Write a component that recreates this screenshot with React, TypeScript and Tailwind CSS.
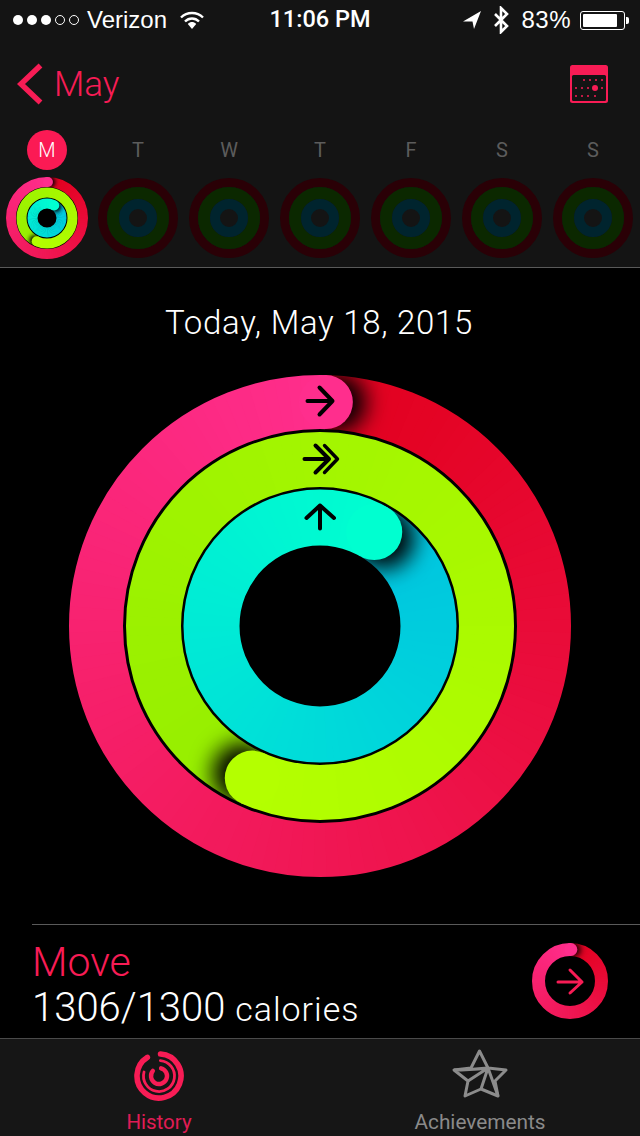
import { useId, type ReactNode } from 'react';

const ROBOTO = "font-['Roboto',sans-serif]";
const ARIAL = "font-['Liberation_Sans',sans-serif]";

type RingDef = { r: number; w: number; end: number; from: string; to: string };

const BIG_RINGS: RingDef[] = [
  { r: 224, w: 54, end: 1.5, from: '#e2001d', to: '#ff2e8d' },
  { r: 166.5, w: 55, end: 204, from: '#96ee00', to: '#b4ff00' },
  { r: 108.5, w: 56, end: 30, from: '#00c2e0', to: '#00ffd0' },
];

const MINI_RINGS: RingDef[] = [
  { r: 36, w: 10, end: 1.5, from: '#e2001d', to: '#ff2e8d' },
  { r: 25.5, w: 10, end: 204, from: '#96ee00', to: '#b4ff00' },
  { r: 14.5, w: 10, end: 30, from: '#00c2e0', to: '#00ffd0' },
];

const MOVE_RING: RingDef[] = [{ r: 31.5, w: 13, end: 1.5, from: '#e2001d', to: '#ff2e8d' }];

const DAYS = ['T', 'W', 'T', 'F', 'S', 'S'];

function polar(r: number, deg: number) {
  const a = (deg * Math.PI) / 180;
  return [r * Math.sin(a), -r * Math.cos(a)];
}

function mix(a: string, b: string, t: number) {
  const out = [1, 3, 5].map((i) => {
    const x = parseInt(a.slice(i, i + 2), 16);
    const y = parseInt(b.slice(i, i + 2), 16);
    return Math.round(x + (y - x) * t);
  });
  return `rgb(${out.join(',')})`;
}

function arc(r: number, start: number, end: number) {
  const [x1, y1] = polar(r, start);
  const [x2, y2] = polar(r, end);
  const large = end - start > 180 ? 1 : 0;
  return `M${x1} ${y1}A${r} ${r} 0 ${large} 1 ${x2} ${y2}`;
}

function Segments({ ring, from, to }: { ring: RingDef; from: number; to: number }) {
  // short arcs so the colour can follow the angle, drawn wide and trimmed by the mask
  const paths = [];
  for (let d = from; d < to; d += 3) {
    paths.push(
      <path
        key={d}
        d={arc(ring.r, ring.end + d, ring.end + Math.min(d + 5, 360))}
        fill="none"
        stroke={mix(ring.from, ring.to, d / 360)}
        strokeWidth={ring.w + 4}
      />
    );
  }
  return <>{paths}</>;
}

function Ring({ ring, blur, id }: { ring: RingDef; blur: number; id: string }) {
  const [cx, cy] = polar(ring.r, ring.end);
  const [sx, sy] = polar(ring.r, ring.end + ((ring.w * 0.2) / ring.r) * 57.3);
  const box = ring.r + ring.w;
  return (
    <g>
      <mask id={id} maskUnits="userSpaceOnUse" x={-box} y={-box} width={box * 2} height={box * 2}>
        <circle r={ring.r} fill="none" stroke="white" strokeWidth={ring.w} />
      </mask>
      <filter id={`${id}b`} x="-150%" y="-150%" width="400%" height="400%">
        <feGaussianBlur stdDeviation={blur} />
      </filter>
      <g mask={`url(#${id})`}>
        <Segments ring={ring} from={0} to={360} />
        <circle cx={sx} cy={sy} r={ring.w * 0.55} fill="black" filter={`url(#${id}b)`} />
        <Segments ring={ring} from={300} to={360} />
      </g>
      <circle cx={cx} cy={cy} r={ring.w / 2} fill={ring.to} />
    </g>
  );
}

function Rings({ rings, size, blur, children }: { rings: RingDef[]; size: number; blur: number; children?: ReactNode }) {
  const id = useId().replace(/[^a-zA-Z0-9]/g, '');
  return (
    <svg width={size} height={size} viewBox={`${-size / 2} ${-size / 2} ${size} ${size}`} className="block">
      {rings.map((ring, i) => (
        <Ring key={i} ring={ring} blur={blur} id={`${id}r${i}`} />
      ))}
      {children}
    </svg>
  );
}

function EmptyRings() {
  return (
    <svg width="80" height="80" viewBox="-40 -40 80 80" className="block">
      <circle r="35.5" fill="none" stroke="#2a0006" strokeWidth="9" />
      <circle r="25" fill="none" stroke="#0b2800" strokeWidth="12" />
      <circle r="14" fill="none" stroke="#00242e" strokeWidth="10" />
    </svg>
  );
}

function SignalDots() {
  return (
    <div className="flex gap-[4px]">
      <div className="w-[10px] h-[10px] rounded-full bg-white" />
      <div className="w-[10px] h-[10px] rounded-full bg-white" />
      <div className="w-[10px] h-[10px] rounded-full bg-white" />
      <div className="w-[10px] h-[10px] rounded-full border border-white" />
      <div className="w-[10px] h-[10px] rounded-full border border-white" />
    </div>
  );
}

function StatusBar() {
  return (
    <div className={`h-[40px] grid grid-cols-[1fr_auto_1fr] items-center text-white ${ARIAL}`}>
      <div className="flex items-center pl-[13px]">
        <SignalDots />
        <span className="ml-[8px] text-[24px] leading-none">Verizon</span>
        <svg width="24" height="18" viewBox="0 0 24 18" className="ml-[13px]">
          <path d="M1 6.5C7 .5 17 .5 23 6.5" fill="none" stroke="white" strokeWidth="2.4" />
          <path d="M5 10.5C9 6.5 15 6.5 19 10.5" fill="none" stroke="white" strokeWidth="2.4" />
          <path d="M7.8 13C10.5 10.4 13.5 10.4 16.2 13L12 18Z" fill="white" />
        </svg>
      </div>
      <div className={`text-[23.5px] leading-none font-medium ${ROBOTO}`}>11:06 PM</div>
      <div className="flex items-center justify-end pr-[11px]">
        <svg width="18" height="18" viewBox="0 0 18 18">
          <path d="M0 10.5L18 0L11 18L9.5 10.5Z" fill="white" />
        </svg>
        <svg width="16" height="28" viewBox="0 0 16 28" className="ml-[12px]">
          <path d="M2 8L14 20L8 26V2L14 8L2 20" fill="none" stroke="white" strokeWidth="2.6" />
        </svg>
        <span className="ml-[12px] text-[24px] leading-none tracking-[0.5px]">83%</span>
        <div className="ml-[9px] w-[45px] h-[19px] rounded-[3px] border border-white p-[2px]">
          <div className="w-[34px] h-full bg-white rounded-[1px]" />
        </div>
        <div className="ml-[1px] w-[3px] h-[7px] bg-white rounded-r-[2px]" />
      </div>
    </div>
  );
}

function CalendarIcon() {
  return (
    <svg width="38" height="38" viewBox="0 0 38 38">
      <rect width="38" height="38" rx="2.5" fill="#f81c55" />
      <rect x="2" y="10" width="34" height="26" rx="1.5" fill="#141414" />
      {[14, 20, 26, 32].map((x) => (
        <circle key={x} cx={x} cy="15" r="1" fill="#f81c55" />
      ))}
      {[6, 12, 18, 32].map((x) => (
        <circle key={x} cx={x} cy="23" r="1" fill="#f81c55" />
      ))}
      <circle cx="25" cy="23" r="3" fill="#f81c55" />
      {[6, 12, 18, 25].map((x) => (
        <circle key={x} cx={x} cy="31" r="1" fill="#f81c55" />
      ))}
    </svg>
  );
}

function NavBar() {
  return (
    <div className="h-[88px] flex items-center justify-between pl-[17px] pr-[32px]">
      <div className="flex items-center">
        <svg width="26" height="42" viewBox="0 0 26 42">
          <path d="M23.5 2.5L4 21L23.5 39.5" fill="none" stroke="#f81c55" strokeWidth="5.5" />
        </svg>
        <span className={`ml-[11px] text-[35px] leading-none font-light text-[#f81c55] ${ROBOTO}`}>May</span>
      </div>
      <CalendarIcon />
    </div>
  );
}

function WeekStrip() {
  return (
    <div className="h-[140px] border-b border-[#5a5a5a] grid grid-cols-7 px-[1.5px] pt-[2px]">
      <div className="flex flex-col items-center">
        <div className={`w-[40px] h-[40px] rounded-full bg-[#fb1a54] flex items-center justify-center text-white text-[20px] font-light ${ROBOTO}`}>
          M
        </div>
        <div className="mt-[7px] rounded-full bg-black">
          <Rings rings={MINI_RINGS} size={82} blur={2} />
        </div>
      </div>
      {DAYS.map((d, i) => (
        <div key={i} className="flex flex-col items-center">
          <div className={`h-[40px] flex items-center text-[20px] text-[#5c5c5c] ${ROBOTO}`}>{d}</div>
          <div className="mt-[8px]">
            <EmptyRings />
          </div>
        </div>
      ))}
    </div>
  );
}

function Activity() {
  return (
    <div className="flex-1 bg-black flex flex-col items-center">
      <h1 className={`mt-[35px] mr-[2px] h-[40px] leading-[40px] text-[33px] font-light tracking-[0.7px] text-white ${ROBOTO}`}>
        Today, May 18, 2015
      </h1>
      <div className="mt-[32px]">
        <Rings rings={BIG_RINGS} size={502} blur={11}>
          <g transform="translate(-320 -626)" fill="none" stroke="black" strokeLinecap="round" strokeLinejoin="round">
            <g strokeWidth="4">
              <path d="M307.5 401H332.5M319.5 387.5L332.5 401L319.5 414.5" />
              <path d="M304.5 459H328.5M315.5 445.5L329 459L315.5 472.5" />
              <path d="M320 528.5V505.5M306.5 518L320 505.5L334 518" />
            </g>
            <path d="M324.5 445.5L337.5 459L324.5 472.5" strokeWidth="3.4" />
          </g>
        </Rings>
      </div>
      <div className="mt-[47px] ml-[32px] self-stretch border-t border-[#5a5a5a] h-[113px] flex items-center justify-between pr-[32px]">
        <div className={`pt-[8px] font-light ${ROBOTO}`}>
          <div className="text-[41px] leading-[46px] text-[#f81c55]">Move</div>
          <div className="text-white leading-[46px] text-[40px]">
            1306/1300 <span className="text-[34px] tracking-[1px]">calories</span>
          </div>
        </div>
        <Rings rings={MOVE_RING} size={76} blur={3}>
          <path d="M-12 1H12M0 -11L12 1L0 12" fill="none" stroke="#f81c55" strokeWidth="3" strokeLinecap="round" strokeLinejoin="round" />
        </Rings>
      </div>
    </div>
  );
}

function HistoryIcon() {
  return (
    <svg width="52" height="52" viewBox="-26 -26 52 52" fill="none" stroke="#f81c55" strokeLinecap="round">
      <path d={arc(22, 4, 328)} strokeWidth="5.6" />
      <path d={arc(15.5, 5, 285)} strokeWidth="2.8" />
      <path d={arc(8, 15, 310)} strokeWidth="4.4" />
    </svg>
  );
}

function StarIcon() {
  return (
    <svg width="70" height="62" viewBox="0 0 70 62" fill="none" stroke="#8c8c8c" strokeWidth="3" strokeLinejoin="round">
      <path d="M34.5 6L43 23L61 25L50 36L53 51L36 44L20 51L23 36L9 25L26 23Z" />
      <path d="M9 25C20 25 33 24 43 23L23 36M43 23L36 44M43 23L53 51" />
    </svg>
  );
}

function TabBar() {
  return (
    <div className={`h-[98px] bg-[#161616] border-t border-[#4a4a4a] grid grid-cols-2 ${ROBOTO}`}>
      <div className="flex flex-col items-center pt-[11px] pr-[2px]">
        <HistoryIcon />
        <span className="mt-[8px] text-[20.5px] leading-[24px] text-[#e01c55]">History</span>
      </div>
      <div className="flex flex-col items-center pt-[6px]">
        <StarIcon />
        <span className="mt-[3px] text-[20.8px] leading-[24px] text-[#8a8a8a]">Achievements</span>
      </div>
    </div>
  );
}

export default function App() {
  return (
    <div className="w-[640px] h-[1136px] flex flex-col bg-[#141414] overflow-hidden">
      <StatusBar />
      <NavBar />
      <WeekStrip />
      <Activity />
      <TabBar />
    </div>
  );
}
